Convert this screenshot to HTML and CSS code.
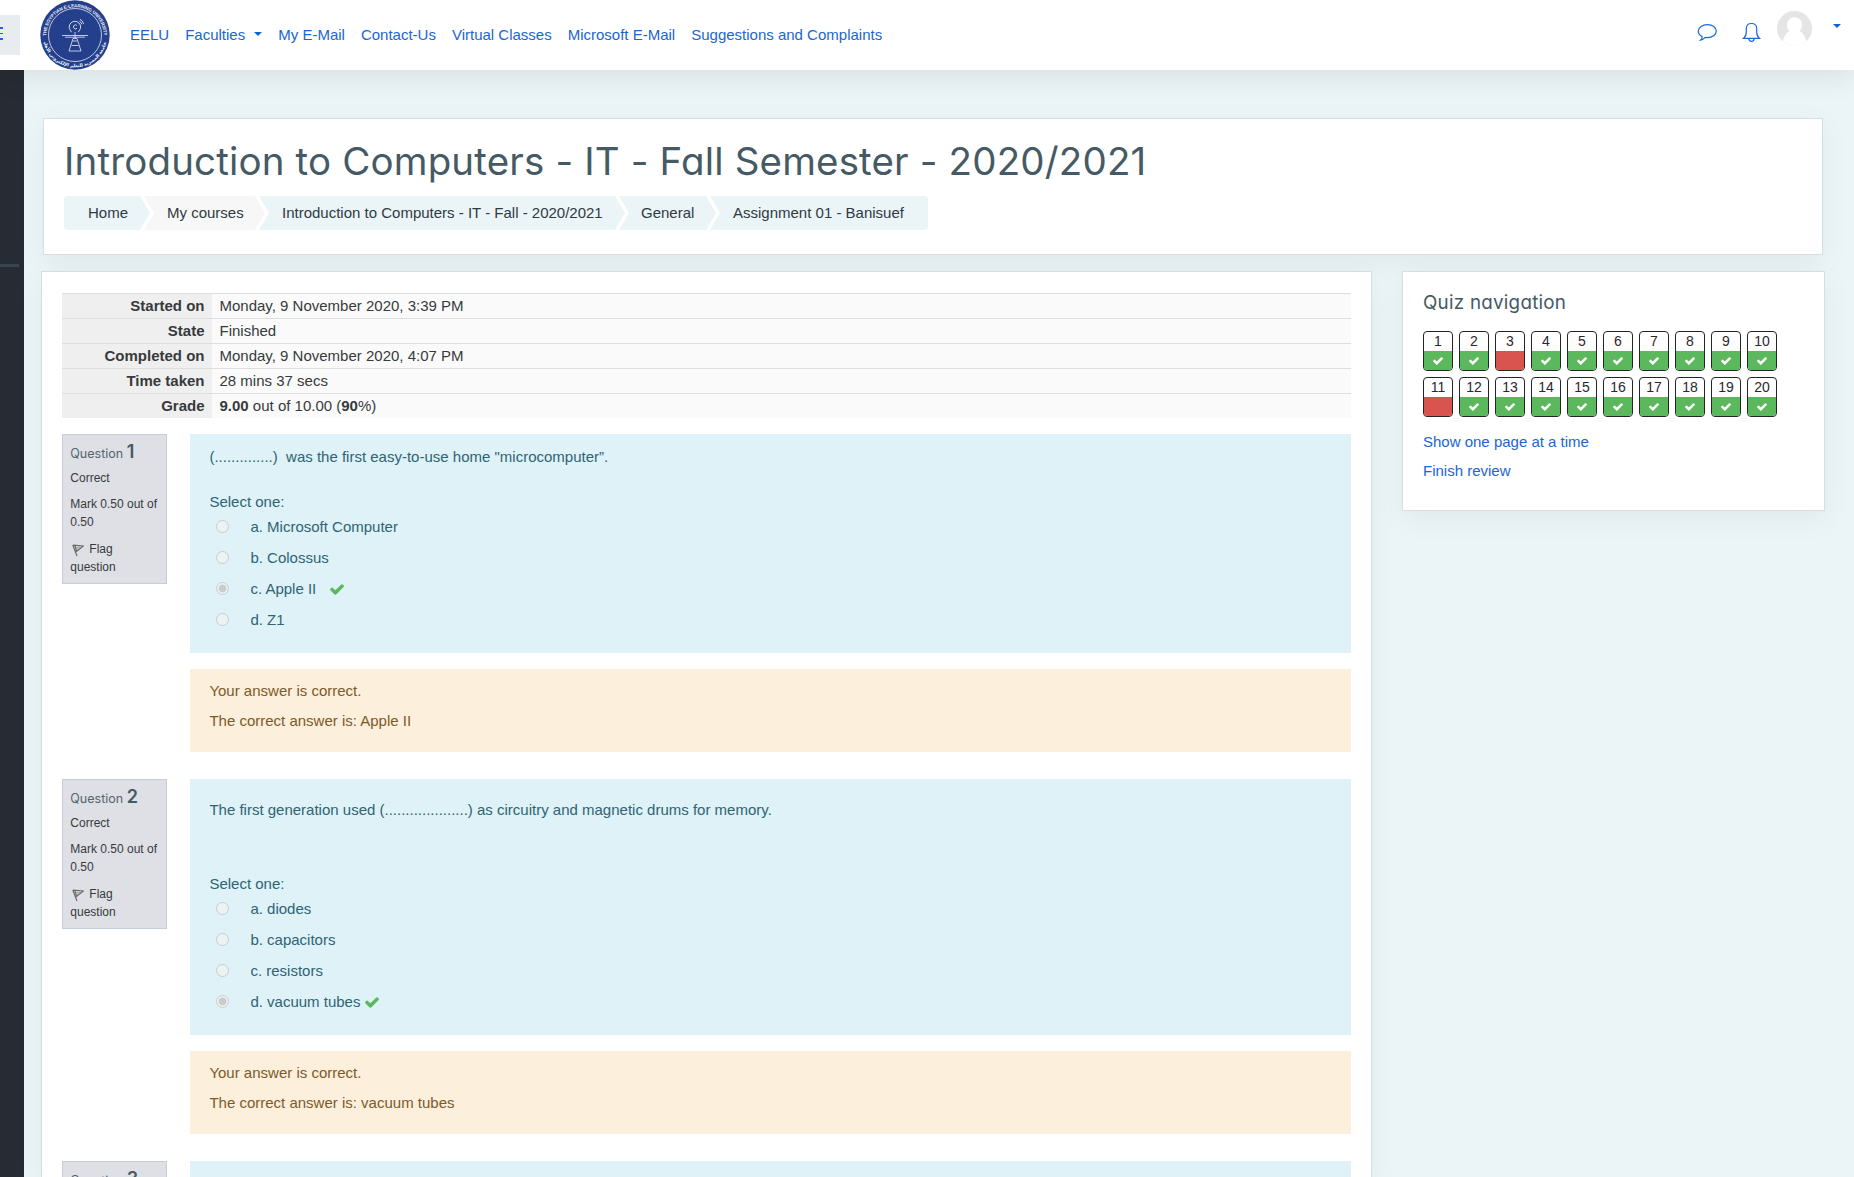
FILE: index.html
```html
<!DOCTYPE html>
<html lang="en">
<head>
<meta charset="utf-8">
<title>Assignment 01 - Banisuef</title>
<link rel="stylesheet" href="styles.css">
</head>
<body>
<svg class="sprite" width="0" height="0">
  <symbol id="check" viewBox="0 0 1550 1188"><path d="M1550 232q0 40-28 68l-724 724-136 136q-28 28-68 28t-68-28l-136-136-362-362q-28-28-28-68t28-68l136-136q28-28 68-28t68 28l294 295 656-657q28-28 68-28t68 28l136 136q28 28 28 68z"/></symbol>
  <symbol id="flag" viewBox="0 0 12 13"><path d="M.8 1 5 12M1 1.200 11.300 2 4.400 7.600M3 1.800 4.800 8" fill="none" stroke="#6a6a6a" stroke-width="1.200"/><path d="M4.600 3.400 8.600 3.300 5.400 5.900z" fill="none" stroke="#8a8a8a" stroke-width=".7"/></symbol>
</svg>
<header class="topbar">
  <button class="menu" aria-label="Side panel"><span></span><span></span><span></span></button>
  <svg class="logo" width="70" height="70" viewBox="0 0 70 70">
    <circle cx="35" cy="35" r="34.700" fill="#243f8b"/>
    <g fill="none" stroke="#e7ebf6">
      <circle cx="35" cy="35" r="26.500" stroke-width=".8"/>
      <path d="M31.500 32.200c-1-2-2.300-2.900-2.300-5.200a5.700 5.700 0 0 1 11.400 0c0 2.300-1.300 3.200-2.300 5.200M36.800 25.400a2 2 0 1 0 .2 2.800M39.500 21.300q1.800 1 2.400 3M40 19.300q3 1.500 3.600 4.600" stroke-width=".9"/>
      <path d="M22 35.500h26M25 37.200h20M33 38.500h4l4 12.500H29z" stroke-width=".8"/>
      <path d="M32.500 41h5M31.500 45.500h7M35 32v6" stroke-width=".8"/>
    </g>
    <path id="arc-top" d="M6.200 36a28.800 28.800 0 0 1 57.600 0" fill="none"/>
    <path id="arc-bottom" d="M3.700 42a32 32 0 0 0 62.600 0" fill="none"/>
    <text class="seal"><textPath href="#arc-top" textLength="90">THE EGYPTIAN E-LEARNING UNIVERSITY</textPath></text>
    <text class="seal"><textPath href="#arc-bottom" startOffset="50%" text-anchor="middle">الجامعة المصرية للتعلم الإلكتروني الأهلية</textPath></text>
  </svg>
  <nav class="links">
    <a>EELU</a><a>Faculties<i class="caret"></i></a><a>My E-Mail</a><a>Contact-Us</a><a>Virtual Classes</a><a>Microsoft E-Mail</a><a>Suggestions and Complaints</a>
  </nav>
  <div class="user">
    <svg width="21" height="19" viewBox="0 0 21 19" fill="none" stroke="#1a6ad8" stroke-width="1.200"><path d="M10.500 1.600c5 0 8.800 2.900 8.800 6.500s-3.800 6.500-8.800 6.500c-.8 0-1.600-.1-2.300-.2-1.300 1.400-3 2.500-4.700 2.700 1-.9 1.600-2 1.700-3.400C2.800 12.500 1.300 10.500 1.300 8.100c0-3.600 4.200-6.500 9.200-6.500z"/></svg>
    <svg class="bell" width="19" height="21" viewBox="0 0 19 21" fill="none" stroke="#1a6ad8" stroke-width="1.200"><path d="M1.500 16.400c2-1.600 2.800-3.500 2.800-6.400V6.500c0-3.200 2.200-5 5.200-5s5.200 1.800 5.200 5V10c0 2.900.8 4.800 2.800 6.400zM6.800 16.800c.3 1.700 1.200 2.500 2.700 2.500s2.400-.8 2.700-2.500"/></svg>
    <svg class="avatar" width="35" height="35" viewBox="0 0 35 35"><defs><clipPath id="disc"><circle cx="17.500" cy="17.500" r="17.500"/></clipPath></defs><g clip-path="url(#disc)"><path fill="#e5e5e5" d="M0 0h35v35H0z"/><circle cx="17.500" cy="14" r="7.700" fill="#fff"/><path d="M5.500 35c0-8 3-13 7-15h10c4 2 7 7 7 15z" fill="#fff"/></g></svg>
    <i class="caret"></i>
  </div>
</header>
<div class="shell">
  <aside class="drawer"><div class="rule"></div></aside>
  <div class="page">
    <section class="card heading">
      <h1>Introduction to Computers - IT - Fall Semester - 2020/2021</h1>
      <ol class="crumbs">
        <li class="c1">Home</li><li class="c2">My courses</li><li class="c3">Introduction to Computers - IT - Fall - 2020/2021</li><li class="c4">General</li><li class="c5">Assignment 01 - Banisuef</li>
      </ol>
    </section>
    <div class="columns">
      <main class="card quiz">
        <table class="summary">
          <tr><th>Started on</th><td>Monday, 9 November 2020, 3:39 PM</td></tr>
          <tr><th>State</th><td>Finished</td></tr>
          <tr><th>Completed on</th><td>Monday, 9 November 2020, 4:07 PM</td></tr>
          <tr><th>Time taken</th><td>28 mins 37 secs</td></tr>
          <tr><th>Grade</th><td><b>9.00</b> out of 10.00 (<b>90</b>%)</td></tr>
        </table>
        <article class="question">
          <div class="info">
            <h3>Question <b>1</b></h3><p>Correct</p><p class="grade">Mark 0.50 out of 0.50</p>
            <p class="flag"><svg width="12" height="13"><use href="#flag"/></svg>Flag question</p>
          </div>
          <div class="content">
            <div class="formulation">
              <p class="qtext">(..............)&nbsp; was the first easy-to-use home "microcomputer”.</p>
              <p class="prompt">Select one:</p>
              <ul class="answers">
                <li><i class="radio"></i>a. Microsoft Computer</li>
                <li><i class="radio"></i>b. Colossus</li>
                <li><i class="radio on"></i>c. Apple II<svg class="ok far" width="14" height="11"><use href="#check"/></svg></li>
                <li><i class="radio"></i>d. Z1</li>
              </ul>
            </div>
            <div class="feedback"><p>Your answer is correct.</p><p>The correct answer is: Apple II</p></div>
          </div>
        </article>
        <article class="question">
          <div class="info">
            <h3>Question <b>2</b></h3><p>Correct</p><p class="grade">Mark 0.50 out of 0.50</p>
            <p class="flag"><svg width="12" height="13"><use href="#flag"/></svg>Flag question</p>
          </div>
          <div class="content">
            <div class="formulation tall">
              <p class="qtext">The first generation used (....................) as circuitry and magnetic drums for memory.</p>
              <p class="prompt">Select one:</p>
              <ul class="answers">
                <li><i class="radio"></i>a. diodes</li>
                <li><i class="radio"></i>b. capacitors</li>
                <li><i class="radio"></i>c. resistors</li>
                <li><i class="radio on"></i>d. vacuum tubes<svg class="ok" width="14" height="11"><use href="#check"/></svg></li>
              </ul>
            </div>
            <div class="feedback"><p>Your answer is correct.</p><p>The correct answer is: vacuum tubes</p></div>
          </div>
        </article>
        <article class="question">
          <div class="info"><h3>Question <b>3</b></h3></div>
          <div class="content"><div class="formulation"></div></div>
        </article>
      </main>
      <aside class="card sidenav">
        <h2>Quiz navigation</h2>
        <div class="grid">
          <a>1<span><svg><use href="#check"/></svg></span></a><a>2<span><svg><use href="#check"/></svg></span></a><a>3<span class="bad"></span></a><a>4<span><svg><use href="#check"/></svg></span></a><a>5<span><svg><use href="#check"/></svg></span></a><a>6<span><svg><use href="#check"/></svg></span></a><a>7<span><svg><use href="#check"/></svg></span></a><a>8<span><svg><use href="#check"/></svg></span></a><a>9<span><svg><use href="#check"/></svg></span></a><a>10<span><svg><use href="#check"/></svg></span></a>
          <a>11<span class="bad"></span></a><a>12<span><svg><use href="#check"/></svg></span></a><a>13<span><svg><use href="#check"/></svg></span></a><a>14<span><svg><use href="#check"/></svg></span></a><a>15<span><svg><use href="#check"/></svg></span></a><a>16<span><svg><use href="#check"/></svg></span></a><a>17<span><svg><use href="#check"/></svg></span></a><a>18<span><svg><use href="#check"/></svg></span></a><a>19<span><svg><use href="#check"/></svg></span></a><a>20<span><svg><use href="#check"/></svg></span></a>
        </div>
        <a class="action">Show one page at a time</a>
        <a class="action">Finish review</a>
      </aside>
    </div>
  </div>
</div>
</body>
</html>
```
FILE: styles.css
```css
* { box-sizing: border-box; }
html, body { height: 1177px; overflow: hidden; }
body { margin: 0; background: #ebf4f7; color: #373a3c; font: 15px/22.5px "Liberation Sans", Arial, sans-serif; }
h1, h2, h3, p, ul, ol { margin: 0; padding: 0; font-weight: 400; list-style: none; }
a { color: #1a66d2; }
.sprite { display: block; width: 0; height: 0; }

.topbar { position: relative; display: flex; height: 70px; background: #fff; box-shadow: 0 8px 28px rgba(0, 0, 0, .08); }
.menu { display: flex; flex-direction: column; gap: 4px; width: 20px; height: 40px; margin: 15px 20px 0 0; padding: 12px 0 0; border: 0; background: #e9ecef; }
.menu span { width: 3px; height: 1.500px; background: #1a66d2; }
.logo { flex: none; }
.seal { fill: #eef1fa; font: bold 4.600px "Liberation Sans", "DejaVu Sans", sans-serif; }
.links { display: flex; gap: 16px; margin-left: 20px; padding-top: 24px; }
.caret { display: inline-block; border: 4.500px solid transparent; border-top-color: #0f62d6; border-bottom: 0; }
.links .caret { margin-left: 9px; vertical-align: 4px; }
.user { display: flex; align-items: flex-start; margin-left: auto; padding-right: 13px; }
.user svg { margin-top: 23px; }
.user .bell { margin: 22px 0 0 24px; }
.user .avatar { margin: 11px 0 0 16px; }
.user .caret { margin: 24px 0 0 21px; }

.shell { display: flex; height: 1107px; overflow: hidden; }
.drawer { flex: none; width: 24px; padding-top: 194px; background: #272b33; }
.rule { width: 19px; height: 3px; background: #37474f; }
.page { flex: 1; padding: 48px 0 0 17px; }
.card { background: #fff; border: 1px solid #d5dee3; box-shadow: 0 8px 28px rgba(0, 0, 0, .05); }
.heading { width: 1780px; height: 137px; margin-left: 2px; padding: 17px 20px 0; }
h1 { height: 60px; color: #455a64; font: 400 38.500px/50px Inter, sans-serif; font-feature-settings: "cv11"; letter-spacing: .16px; white-space: nowrap; }
.crumbs { display: flex; }
.crumbs li { height: 34px; margin-right: -6px; line-height: 34px; color: #2f3b42; background: #ebf4f7; white-space: nowrap; clip-path: polygon(0 0, calc(100% - 10px) 0, 100% 50%, calc(100% - 10px) 100%, 0 100%, 10px 50%); }
.crumbs .c1 { width: 86px; padding-left: 24px; border-radius: 4px 0 0 4px; clip-path: polygon(0 0, calc(100% - 10px) 0, 100% 50%, calc(100% - 10px) 100%, 0 100%); }
.crumbs .c2 { width: 121px; padding-left: 23px; background: #f7f7f7; }
.crumbs .c3 { width: 366px; padding-left: 23px; }
.crumbs .c4 { width: 97px; padding-left: 22px; }
.crumbs .c5 { width: 218px; padding-left: 23px; border-radius: 0 4px 4px 0; clip-path: polygon(0 0, 100% 0, 100% 100%, 0 100%, 10px 50%); }

.columns { display: flex; align-items: flex-start; gap: 30px; margin-top: 16px; }
.quiz { width: 1331px; height: 906px; padding: 21px 20px 0; border-bottom: 0; overflow: hidden; }
.summary { width: 1289px; border-collapse: separate; border-spacing: 0; }
.summary th, .summary td { height: 25px; padding: 0 7.500px; border-top: 1px solid #dcdfe1; line-height: 24px; text-align: left; background: #fafafa; }
.summary th { width: 150px; text-align: right; background: #efefef; }
.question { display: flex; gap: 23px; align-items: flex-start; margin-top: 16px; }
.question + .question { margin-top: 27px; }
.info { width: 105px; height: 150px; padding: 6px 8px 0 7.300px; border: 1px solid #c5cdd6; background: #dee0e5; font-size: 12px; line-height: 18px; }
.info h3 { height: 28px; color: #54656e; font: 400 12.500px/22px Inter, sans-serif; }
.info h3 b { color: #455a64; font-size: 18px; font-weight: 600; }
.info p { white-space: nowrap; }
.info .grade { margin-top: 8px; white-space: normal; }
.info .flag { margin-top: 9px; white-space: normal; }
.flag svg { margin: 0 5px 0 2px; vertical-align: -4px; }
.content { width: 1161px; }
.formulation { height: 219px; padding: 12px 19.400px 0; background: #def2f8; color: #2f6473; }
.formulation .prompt { margin-top: 22px; }
.formulation.tall { height: 256px; padding-top: 20px; }
.tall .prompt { margin-top: 51px; }
.answers { margin-top: -1px; }
.answers li { display: flex; align-items: center; height: 31px; padding-left: 6.600px; }
.radio { width: 13px; height: 13px; margin: -3px 21.400px 0 0; border: 1px solid #c8cdcf; border-radius: 50%; background: #edf3f5; }
.radio.on { background: radial-gradient(circle, #c8cccd 3.500px, #edf3f5 4.300px); }
.ok { margin-left: 5px; fill: #5cb85c; }
.ok.far { margin-left: 14px; }
.feedback { height: 83px; margin-top: 16px; padding: 11px 19.400px 0; background: #fcefdc; color: #7d5a29; }
.feedback p + p { margin-top: 7.500px; }

.sidenav { width: 423px; height: 240px; padding: 17px 20px 0; }
.sidenav h2 { height: 42px; color: #455a64; font: 400 18.800px/27px Inter, sans-serif; font-feature-settings: "cv11"; letter-spacing: .25px; }
.grid { display: grid; grid-template-columns: repeat(10, 30px); gap: 6px; margin-bottom: 14px; }
.grid a { display: flex; flex-direction: column; height: 40px; overflow: hidden; border: 1px solid #212529; border-radius: 4px; color: #2a2730; font-size: 14px; line-height: 19px; text-align: center; }
.grid span { display: flex; justify-content: center; align-items: center; flex: 1; background: #5cb85c; }
.grid .bad { background: #d9534f; }
.grid svg { width: 10px; height: 8px; margin-top: 1px; fill: #fff; }
.action { display: block; height: 29px; }
```
